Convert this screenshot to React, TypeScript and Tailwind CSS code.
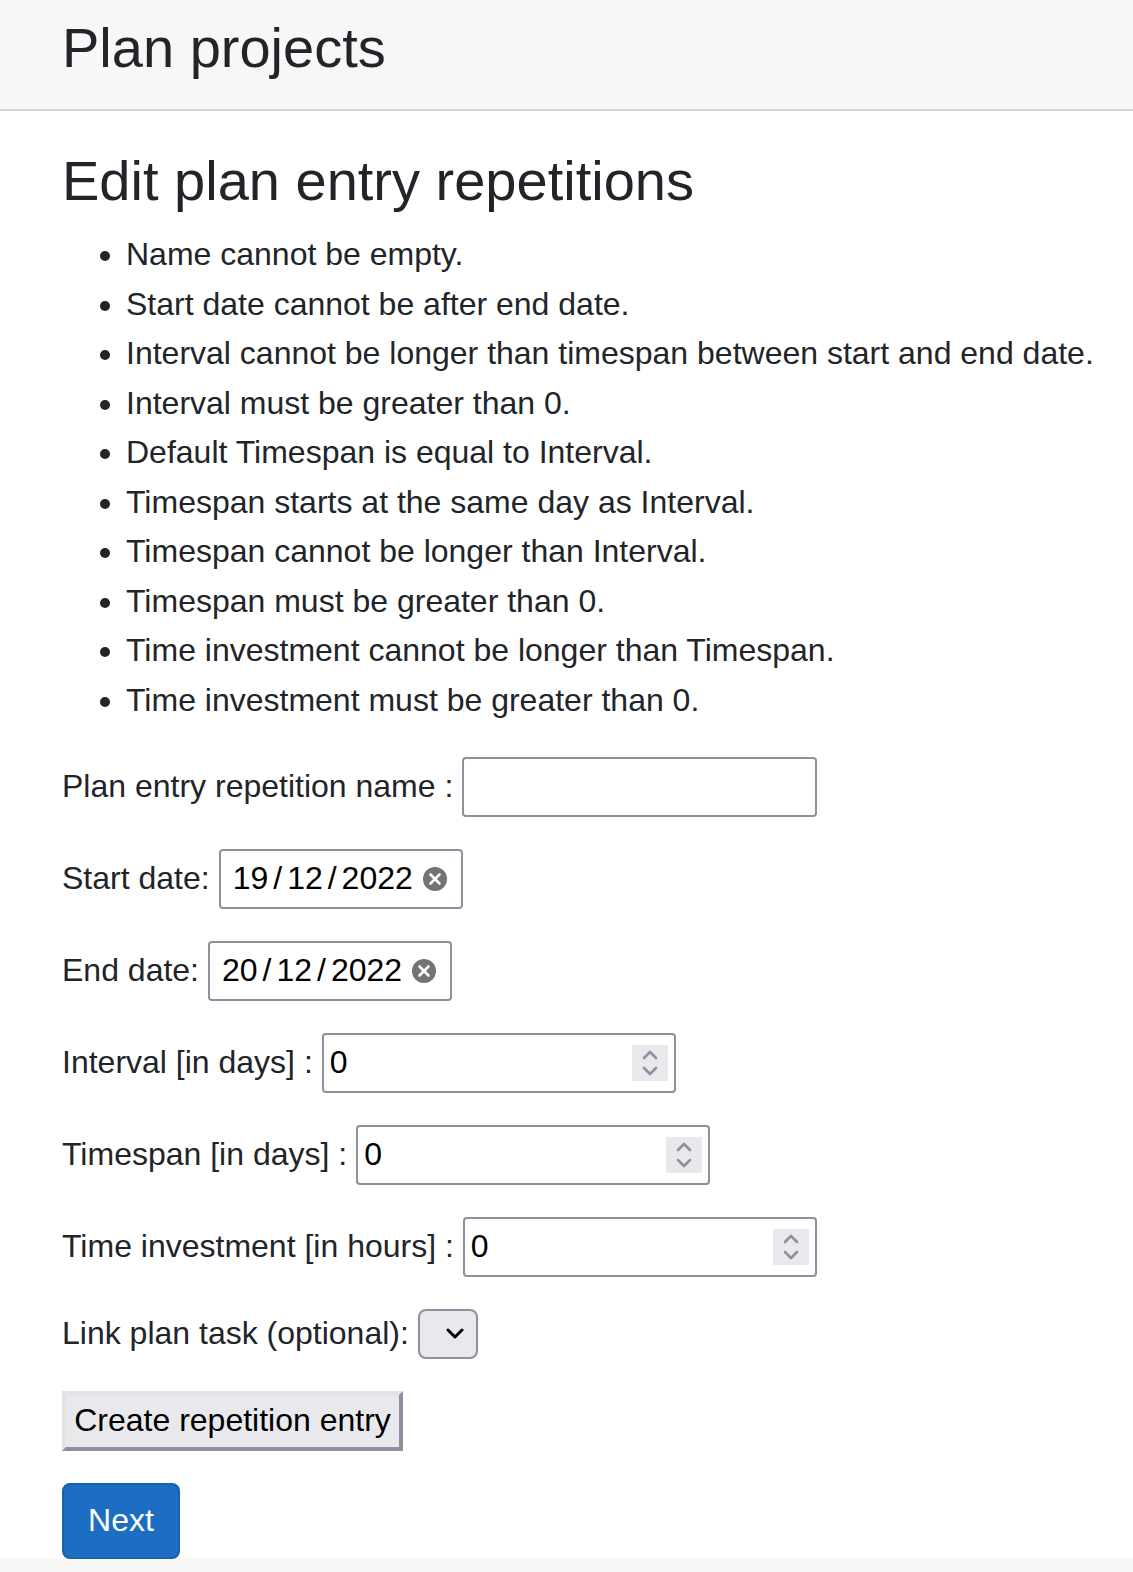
import React from 'react';

const notes = [
  'Name cannot be empty.',
  'Start date cannot be after end date.',
  'Interval cannot be longer than timespan between start and end date.',
  'Interval must be greater than 0.',
  'Default Timespan is equal to Interval.',
  'Timespan starts at the same day as Interval.',
  'Timespan cannot be longer than Interval.',
  'Timespan must be greater than 0.',
  'Time investment cannot be longer than Timespan.',
  'Time investment must be greater than 0.',
];

const box = 'flex h-[60px] items-center rounded-[4px] border-2 border-[#8f8f9d] bg-white text-black';

function DateField({ label, day }: { label: string; day: string }) {
  return (
    <div className="mb-8 flex h-[60px] items-center">
      <span className="mr-[9px] whitespace-pre">{label}</span>
      <div className={`${box} w-[244px] pl-[12px]`}>
        <span>{day}</span>
        <span className="mx-[5px]">/</span>
        <span>12</span>
        <span className="mx-[5px]">/</span>
        <span>2022</span>
        <svg className="ml-[10px]" width="24" height="24" viewBox="0 0 24 24">
          <circle cx="12" cy="12" r="12" fill="#737373" />
          <path d="M7.5 7.5l9 9M16.5 7.5l-9 9" stroke="#fff" strokeWidth="2.6" strokeLinecap="round" />
        </svg>
      </div>
    </div>
  );
}

function NumberField({ label }: { label: string }) {
  return (
    <div className="mb-8 flex h-[60px] items-center">
      <span className="mr-[9px]">{label}</span>
      <div className={`${box} w-[354px] justify-between pl-[6px] pr-[6px]`}>
        <span>0</span>
        <svg width="36" height="36" viewBox="0 0 36 36">
          <path d="M0 0h36v36H0z" fill="#e9e9ed" />
          <path d="M12 13l6-6 6 6M12 23l6 6 6-6" fill="none" stroke="#8f8f9d" strokeWidth="2.6" strokeLinecap="round" strokeLinejoin="round" />
        </svg>
      </div>
    </div>
  );
}

export default function App() {
  return (
    <div className="h-[1572px] w-[1133px] overflow-hidden bg-[#f7f7f7] font-['Liberation_Sans',Arial,sans-serif] text-[32px] leading-[49.5px] text-[#212529]">
      <header className="h-[111px] border-b-2 border-[#d5d5d5] pl-[62px] pt-[14px]">
        <h1 className="text-[56px] leading-[67px]">Plan projects</h1>
      </header>
      <main className="h-[1447px] bg-white pl-[62px] pt-[36px]">
        <h2 className="text-[56px] leading-[67px]">Edit plan entry repetitions</h2>
        <ul className="mb-[32px] mt-[16px] list-disc pl-[64px]">
          {notes.map((note) => <li key={note} className="whitespace-nowrap">{note}</li>)}
        </ul>
        <div className="mb-8 flex h-[60px] items-center">
          <span className="mr-[9px]">Plan entry repetition name :</span>
          <div className={`${box} w-[355px]`} />
        </div>
        <DateField label="Start date:" day="19" />
        <DateField label="End date:" day="20" />
        <NumberField label="Interval [in days] :" />
        <NumberField label="Timespan [in days] :" />
        <NumberField label="Time investment [in hours] :" />
        <div className="mb-8 flex h-[50px] items-center">
          <span className="mr-[9px]">Link plan task (optional):</span>
          <button className="flex h-[50px] w-[60px] items-center justify-end rounded-[8px] border-2 border-[#8f8f9d] bg-[#e9e9ed] pr-[12px]">
            <svg width="18" height="12" viewBox="0 0 18 12">
              <path d="M2 2l7 7 7-7" fill="none" stroke="#000" strokeWidth="3" strokeLinecap="round" strokeLinejoin="round" />
            </svg>
          </button>
        </div>
        <button className="mb-8 flex h-[60px] w-[341px] items-center justify-center whitespace-nowrap border-4 border-b-[#8f8f9d] border-l-[#e3e3e3] border-r-[#8f8f9d] border-t-[#e3e3e3] bg-[#e9e9ed] text-black">Create repetition entry</button>
        <button className="flex h-[76px] w-[118px] items-center justify-center rounded-[8px] border-2 border-[#1861ac] bg-[#1b6ec2] text-white">Next</button>
      </main>
    </div>
  );
}
